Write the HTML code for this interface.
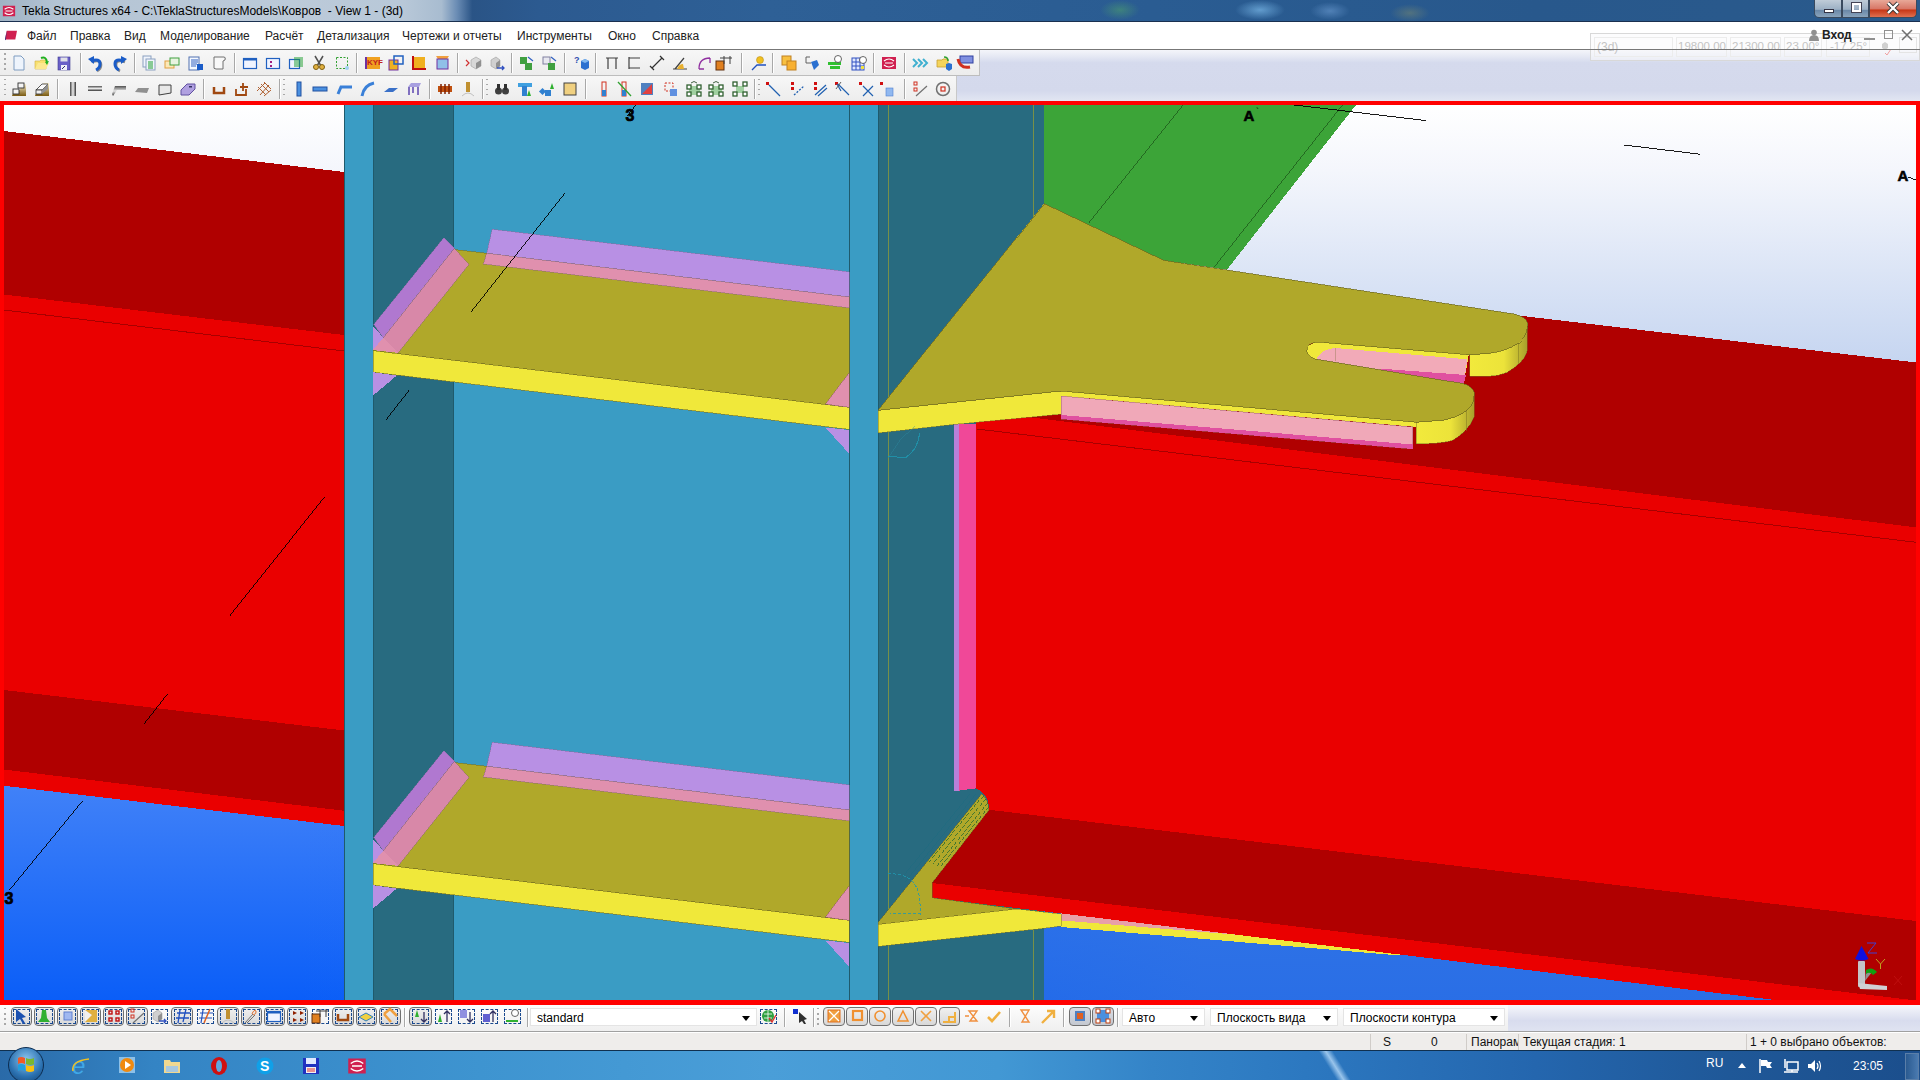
<!DOCTYPE html>
<html><head><meta charset="utf-8">
<style>
*{margin:0;padding:0;box-sizing:border-box}
html,body{width:1920px;height:1080px;overflow:hidden;background:#f0f0f0;font-family:"Liberation Sans",sans-serif;font-size:12px;color:#000;position:relative}
.abs{position:absolute}
.ic{position:absolute;overflow:visible}
.sep{position:absolute;width:2px;border-left:1px solid #a8a8a8;border-right:1px solid #fff}
.grip{position:absolute;width:2px;height:19px;background:repeating-linear-gradient(#a8a8a8 0 1.5px,transparent 1.5px 5px)}
#title{left:0;top:0;width:1920px;height:22px;background:linear-gradient(90deg,#9fb2c4 0%,#b4c4d4 3%,#bccad9 15%,#b8c8d8 21%,#a8bcd0 23%,#6a8cb4 23.8%,#2a5486 24.6%,#2c5a90 28%,#2e6096 40%,#2a5c92 60%,#28588c 80%,#2a5a8c 100%);border-bottom:1px solid #1a3050}
#title .t{left:22px;top:4px;font-size:12px;color:#000;white-space:nowrap}
#menu{left:0;top:22px;width:1920px;height:28px;background:#fff;border-bottom:1px solid #9c9c9c}
#menu span{position:absolute;top:7px;font-size:12px;color:#222}
.tb{left:0;height:26px;background:linear-gradient(#f7f7f7,#ececec)}
#tb1{top:50px;width:980px;border-bottom:1px solid #bdbdbd;border-right:1px solid #c0c0c0}
#tb2{top:76px;width:957px;border-right:1px solid #c8c8c8}
#dock{left:0;top:50px;width:1920px;height:51px;background:linear-gradient(#f4f5fa 0%,#e6e9f4 12%,#d5daed 25%,#d4d9ec 80%,#e2e6f2 100%)}
#btb{left:0;top:1005px;width:1920px;height:27px;background:linear-gradient(#fdfdfd,#efefef);border-bottom:1px solid #a0a0a0}
#btbr{left:1508px;top:1005px;width:412px;height:26px;background:linear-gradient(#f6f7fb,#d8dcee 60%,#dfe3f1)}
#status{left:0;top:1032px;width:1920px;height:18px;background:#efedeb;border-top:1px solid #fff}
#status span{position:absolute;top:2px;font-size:12px;color:#111;white-space:nowrap}
#status .sp{position:absolute;top:1px;width:1px;height:16px;background:#d0ccc8}
#task{left:0;top:1050px;width:1920px;height:30px;background:linear-gradient(90deg,#2a6aa8 0%,#3484c4 8%,#3e94d0 25%,#4a9ed8 40%,#4298d4 52%,#3484c8 60%,#2c78c0 68%,#2466ae 80%,#1f5898 90%,#1b4e8c 100%);border-top:1px solid #10304f}
.bb{position:absolute;top:1007px;height:19px;border:1.5px solid #707070;border-radius:4px;background:linear-gradient(#f0f0f0,#d8d8d8)}
.bb.pr{background:linear-gradient(#d8dce4,#c4c8d0)}
.bd{position:absolute;top:1009px;width:17px;height:15px;border:1px dashed #1a4a90}
.dd{position:absolute;top:1008px;height:18px;background:#fff;border:1px solid #e4e4e4}
.dd span{position:absolute;left:6px;top:2px;font-size:12px;color:#000;white-space:nowrap}
.dd i{position:absolute;right:6px;top:7px;width:0;height:0;border-left:4px solid transparent;border-right:4px solid transparent;border-top:5px solid #000}
.wb{position:absolute;top:0;height:18px;border:1px solid #3a4a5e;border-top:none}
.tbtn{position:absolute;top:1053px;width:42px;height:27px;border:1px solid #1a4870;border-radius:3px;background:linear-gradient(#6eb0e0,#3a88c8 50%,#2e7abc);box-shadow:inset 0 0 0 1px rgba(255,255,255,.35)}
</style></head><body>
<div id="title" class="abs">
<svg class="ic" style="left:2px;top:4px" width="14" height="14" viewBox="0 0 16 16"><rect x="1" y="2" width="14" height="12" fill="#d02050"/><path d="M3,6 Q8,2 13,6 M3,10 Q8,14 13,10 M4,8 H12" stroke="#fff" stroke-width="1.2" fill="none"/></svg>
<div class="t abs">Tekla Structures x64 - C:\TeklaStructuresModels\Ковров&nbsp; - View 1 - (3d)</div>
<div class="abs" style="left:1100px;top:0;width:40px;height:20px;border-radius:50%;background:radial-gradient(#4a9a70,transparent 70%);opacity:.6"></div>
<div class="abs" style="left:1235px;top:0;width:50px;height:20px;border-radius:50%;background:radial-gradient(#7ab8e8,transparent 70%);opacity:.7"></div>
<div class="abs" style="left:1310px;top:2px;width:40px;height:18px;border-radius:50%;background:radial-gradient(#6a9ad0,transparent 70%);opacity:.6"></div>
<div class="abs" style="left:1390px;top:4px;width:40px;height:18px;border-radius:50%;background:radial-gradient(#7a8a70,transparent 70%);opacity:.5"></div>
<div class="wb" style="left:1814px;width:28px;border-radius:0 0 0 5px;background:linear-gradient(#c0ccd8,#9cb0c4 55%,#6a88a8 60%,#8aa4bc)"></div>
<div class="wb" style="left:1842px;width:27px;background:linear-gradient(#c0ccd8,#9cb0c4 55%,#6a88a8 60%,#8aa4bc)"></div>
<div class="wb" style="left:1869px;width:48px;border-radius:0 0 5px 0;background:linear-gradient(#e8a898,#d87868 50%,#c83818 60%,#e07050)"></div>
<div class="abs" style="left:1824px;top:9px;width:10px;height:4px;background:#fff;border:1px solid #334"></div>
<div class="abs" style="left:1852px;top:3px;width:9px;height:9px;border:2px solid #fff;outline:1px solid #445"></div>
<svg class="ic" style="left:1886px;top:2px" width="14" height="12" viewBox="0 0 14 12"><path d="M2,1 L12,11 M12,1 L2,11" stroke="#333" stroke-width="4"/><path d="M2,1 L12,11 M12,1 L2,11" stroke="#fff" stroke-width="2.4"/></svg>
</div>
<div id="menu" class="abs">
<svg class="ic" style="left:4px;top:8px" width="14" height="12" viewBox="0 0 16 14"><path d="M3,1 H15 L13,11 H1Z" fill="#d02050"/><path d="M1,11 L3,1 L2,12Z" fill="#303080"/></svg>
<span style="left:27px">Файл</span><span style="left:70px">Правка</span><span style="left:124px">Вид</span><span style="left:160px">Моделирование</span><span style="left:265px">Расчёт</span><span style="left:317px">Детализация</span><span style="left:402px">Чертежи и отчеты</span><span style="left:517px">Инструменты</span><span style="left:608px">Окно</span><span style="left:652px">Справка</span>
</div>
<div id="dock" class="abs"></div>
<div class="abs" style="left:1590px;top:33px;width:330px;height:28px;border:1px solid #d8d8d8;background:rgba(250,250,252,.55)"></div>
<div class="abs" style="left:1594px;top:37px;width:79px;height:20px;border:1px solid #ececec"></div>
<div class="abs" style="left:1676px;top:37px;width:51px;height:20px;border:1px solid #ececec"></div>
<div class="abs" style="left:1730px;top:37px;width:51px;height:20px;border:1px solid #ececec"></div>
<div class="abs" style="left:1784px;top:37px;width:38px;height:20px;border:1px solid #ececec"></div>
<div class="abs" style="left:1826px;top:37px;width:44px;height:20px;border:1px solid #ececec"></div>
<div class="abs" style="left:1899px;top:37px;width:18px;height:16px;border:1px solid #e4e4e4"></div>
<span class="abs" style="left:1597px;top:40px;color:#c4c4c4;font-size:12px">(3d)</span>
<span class="abs" style="left:1678px;top:40px;color:#c4c4c4;font-size:11.5px">19800.00</span>
<span class="abs" style="left:1732px;top:40px;color:#c4c4c4;font-size:11.5px">21300.00</span>
<span class="abs" style="left:1786px;top:40px;color:#c4c4c4;font-size:11.5px">23.00°</span>
<span class="abs" style="left:1830px;top:40px;color:#c4c4c4;font-size:11.5px">-17.25°</span>
<svg class="ic" style="left:1880px;top:40px" width="12" height="16" viewBox="0 0 12 16"><path d="M2,4 L5,2 L8,4 V8 L5,10 L2,8Z" fill="#d0d0d0"/><path d="M5,13 L7,15 L11,9" stroke="#f0a0a0" fill="none"/></svg>
<div class="abs" style="left:0;top:49px;width:1920px;height:1px;background:#777"></div>
<div id="tb1" class="abs tb"></div><svg class="ic" style="left:1808px;top:29px" width="12" height="12" viewBox="0 0 12 12"><circle cx="6" cy="3.5" r="2.8" fill="#909090"/><path d="M1,12 Q1,6 6,6 Q11,6 11,12Z" fill="#909090"/></svg>
<span class="abs" style="left:1822px;top:28px;font-weight:bold;color:#222">Вход</span>
<div class="abs" style="left:1864px;top:38px;width:11px;height:2px;background:#909090"></div>
<div class="abs" style="left:1884px;top:30px;width:9px;height:9px;border:1px solid #909090"></div>
<svg class="ic" style="left:1900px;top:28px" width="14" height="14" viewBox="0 0 14 14"><path d="M2,2 L12,12 M12,2 L2,12" stroke="#707070" stroke-width="1.5"/></svg>

<div id="tb2" class="abs tb"></div>
<div class="grip" style="left:4px;top:53px"></div><div class="grip" style="left:4px;top:79px"></div>
<svg class="ic" style="left:11px;top:55px" width="16" height="16" viewBox="0 0 16 16"><path d="M3,1 H10 L13,4 V15 H3 Z" fill="#eef4fc" stroke="#7e9cc0" stroke-width="1"/></svg><svg class="ic" style="left:33.5px;top:55px" width="16" height="16" viewBox="0 0 16 16"><path d="M1,6 H6 L7,5 H12 V14 H1 Z" fill="#f8e070" stroke="#d0b040" stroke-width="0.6"/><path d="M1,14 L4,8 H15 L12,14Z" fill="#fce890"/><path d="M7,3 Q12,1 13,7" stroke="#20b020" stroke-width="2" fill="none"/><path d="M11,7 L15,6 L13,10Z" fill="#20b020"/></svg><svg class="ic" style="left:56px;top:55px" width="16" height="16" viewBox="0 0 16 16"><rect x="2" y="2" width="12" height="13" fill="#6a60c8" stroke="#3c3a90" stroke-width="0.6"/><rect x="4.5" y="2.5" width="7" height="4" fill="#e0e0e8"/><rect x="5" y="10" width="6" height="5" fill="#f0f0f8"/><path d="M6,14 L9,11" stroke="#303070"/></svg><div class="sep" style="left:79.5px;top:53px;height:20px"></div><svg class="ic" style="left:87.6px;top:55px" width="16" height="16" viewBox="0 0 16 16"><path d="M3,6 Q12,3 12,9 Q12,13 8,15" stroke="#888" stroke-width="2.6" fill="none" transform="translate(1,1)"/><path d="M3,6 Q12,3 12,9 Q12,13 8,15" stroke="#1a5cc8" stroke-width="3" fill="none"/><path d="M0,4 L6,1 L6,9 Z" fill="#1a5cc8"/></svg><svg class="ic" style="left:111px;top:55px" width="16" height="16" viewBox="0 0 16 16"><path d="M13,6 Q4,3 4,9 Q4,13 8,15" stroke="#888" stroke-width="2.6" fill="none" transform="translate(1,1)"/><path d="M13,6 Q4,3 4,9 Q4,13 8,15" stroke="#1a5cc8" stroke-width="3" fill="none"/><path d="M16,4 L10,1 L10,9 Z" fill="#1a5cc8"/></svg><div class="sep" style="left:133.6px;top:53px;height:20px"></div><svg class="ic" style="left:141px;top:55px" width="16" height="16" viewBox="0 0 16 16"><rect x="2" y="1" width="8" height="11" fill="#f0f4fc" stroke="#8aa0c0"/><rect x="5" y="4" width="9" height="11" fill="#f0f4fc" stroke="#8aa0c0"/><path d="M7,7H12M7,9H12M7,11H12M7,13H12" stroke="#20a030" stroke-width="1"/></svg><svg class="ic" style="left:164px;top:55px" width="16" height="16" viewBox="0 0 16 16"><rect x="1" y="6" width="9" height="7" fill="#fce8b8" stroke="#e0a040"/><rect x="6" y="3" width="9" height="7" fill="#e8f4e0" stroke="#40a040"/></svg><svg class="ic" style="left:188px;top:55px" width="16" height="16" viewBox="0 0 16 16"><rect x="1" y="2" width="10" height="13" fill="#f4f8ff" stroke="#5070b0"/><path d="M3,5H10M3,7H10M3,9H9M3,11H8" stroke="#3060c0"/><rect x="9" y="9" width="6" height="6" fill="#1a5cc8"/></svg><svg class="ic" style="left:211px;top:55px" width="16" height="16" viewBox="0 0 16 16"><path d="M3,2 H13 Q15,2 14,5 L12,6 V14 H5 Q2,14 3,11 Z" fill="#f8f8f8" stroke="#707070"/></svg><div class="sep" style="left:233.5px;top:53px;height:20px"></div><svg class="ic" style="left:242px;top:55px" width="16" height="16" viewBox="0 0 16 16"><rect x="1.5" y="3.5" width="13" height="10" fill="#f0f4ff" stroke="#2060c0" stroke-width="1.2"/><rect x="1.5" y="3.5" width="13" height="2" fill="#2060c0"/></svg><svg class="ic" style="left:265px;top:55px" width="16" height="16" viewBox="0 0 16 16"><rect x="1.5" y="3.5" width="13" height="10" fill="#f0f4ff" stroke="#2060c0" stroke-width="1.2"/><rect x="5" y="6" width="2" height="2" fill="#a02080"/><rect x="5" y="10" width="2" height="2" fill="#a02080"/></svg><svg class="ic" style="left:288px;top:55px" width="16" height="16" viewBox="0 0 16 16"><rect x="1.5" y="4.5" width="10" height="9" fill="#f0f4ff" stroke="#2060c0" stroke-width="1.2"/><path d="M6,3H15M6,5H15M6,7H15M6,9H15M6,11H15" stroke="#20a030"/></svg><svg class="ic" style="left:311px;top:55px" width="16" height="16" viewBox="0 0 16 16"><path d="M4,1 L10,11 M12,1 L6,11" stroke="#505050" stroke-width="1.5"/><circle cx="5" cy="12" r="2.5" fill="#e0b040" stroke="#806010"/><circle cx="11" cy="12" r="2.5" fill="#e0b040" stroke="#806010"/></svg><svg class="ic" style="left:334px;top:55px" width="16" height="16" viewBox="0 0 16 16"><rect x="2.5" y="2.5" width="11" height="11" fill="none" stroke="#30a030" stroke-dasharray="2,1.5"/><circle cx="13" cy="13" r="2" fill="#a0d0f0"/></svg><div class="sep" style="left:356.3px;top:53px;height:20px"></div><svg class="ic" style="left:365.3px;top:55px" width="16" height="16" viewBox="0 0 16 16"><rect x="1" y="2" width="14" height="12" fill="#f0a020"/><path d="M1,14 L1,2" stroke="#7030a0" stroke-width="2"/><text x="2" y="10" font-size="8" font-weight="bold" fill="#c02020" font-family="Liberation Sans">KYF</text></svg><svg class="ic" style="left:387.6px;top:55px" width="16" height="16" viewBox="0 0 16 16"><rect x="1" y="5" width="9" height="10" fill="#f0b020" stroke="#7030a0"/><rect x="6" y="1" width="9" height="8" fill="none" stroke="#2060c0" stroke-width="1.5"/></svg><svg class="ic" style="left:410.6px;top:55px" width="16" height="16" viewBox="0 0 16 16"><rect x="3" y="2" width="11" height="11" fill="#f0b020"/><path d="M2,1 V14 H15" stroke="#c01010" stroke-width="2" fill="none"/></svg><svg class="ic" style="left:433.5px;top:55px" width="16" height="16" viewBox="0 0 16 16"><path d="M2,1 H15 L13,4 H4 Z" fill="#f0a040"/><rect x="3" y="4" width="11" height="10" fill="#90c0e8" stroke="#7030a0"/></svg><div class="sep" style="left:456.5px;top:53px;height:20px"></div><svg class="ic" style="left:465.4px;top:55px" width="16" height="16" viewBox="0 0 16 16"><path d="M1,5 L4,8 L1,11" stroke="#d03030" stroke-width="1.2" fill="none"/><path d="M6,5 L11,2 L16,5 V11 L11,14 L6,11 Z" fill="#d8d8d8" stroke="#909090" stroke-width="0.5"/><path d="M11,8 L16,5 V11 L11,14Z" fill="#909090"/></svg><svg class="ic" style="left:488.6px;top:55px" width="16" height="16" viewBox="0 0 16 16"><path d="M2,5 L7,2 L11,5 L11,11 L7,14 L2,11 Z" fill="#d0d0d0" stroke="#909090" stroke-width="0.5"/><path d="M7,8 L11,5 V11 L7,14Z" fill="#909090"/><path d="M8,13 H15 M13,11 L15,13 L13,15" stroke="#3050c0" stroke-width="1.3" fill="none"/></svg><div class="sep" style="left:510.6px;top:53px;height:20px"></div><svg class="ic" style="left:519.2px;top:55px" width="16" height="16" viewBox="0 0 16 16"><rect x="1" y="2" width="7" height="7" fill="#40a040"/><rect x="6" y="8" width="7" height="7" fill="#40a040"/><path d="M9,2 L14,6" stroke="#3060c0" stroke-width="1.3"/></svg><svg class="ic" style="left:542.2px;top:55px" width="16" height="16" viewBox="0 0 16 16"><rect x="1" y="2" width="7" height="7" fill="#e8e8f0" stroke="#8080a0"/><rect x="6" y="8" width="7" height="7" fill="#40a040"/><path d="M9,2 L14,6" stroke="#3060c0" stroke-width="1.3"/></svg><div class="sep" style="left:564.4px;top:53px;height:20px"></div><svg class="ic" style="left:574px;top:55px" width="16" height="16" viewBox="0 0 16 16"><text x="0" y="8" font-size="9" font-weight="bold" fill="#3050b0" font-family="Liberation Sans">?</text><path d="M7,6 L11,4 L15,6 V13 L11,15 L7,13Z" fill="#2a70d0"/><path d="M7,6 L11,4 L15,6 L11,8Z" fill="#80b8f0"/></svg><div class="sep" style="left:595.4px;top:53px;height:20px"></div><svg class="ic" style="left:604px;top:55px" width="16" height="16" viewBox="0 0 16 16"><path d="M2,3 H14 M4,3 V14 M12,3 V14" stroke="#404040" stroke-width="1.2" fill="none"/></svg><svg class="ic" style="left:626.3px;top:55px" width="16" height="16" viewBox="0 0 16 16"><path d="M3,2 V14 M3,3 H14 M3,13 H14" stroke="#404040" stroke-width="1.2" fill="none"/></svg><svg class="ic" style="left:649.3px;top:55px" width="16" height="16" viewBox="0 0 16 16"><path d="M3,13 L13,3 M1,11 L5,15 M11,1 L15,5" stroke="#303030" stroke-width="1.2"/></svg><svg class="ic" style="left:672.3px;top:55px" width="16" height="16" viewBox="0 0 16 16"><path d="M1,14 H15 M3,14 L12,3" stroke="#404040" stroke-width="1.2"/><path d="M5,14 Q7,9 11,9 L12,14Z" fill="#e8b030"/></svg><svg class="ic" style="left:695.9px;top:55px" width="16" height="16" viewBox="0 0 16 16"><path d="M3,14 Q3,3 14,3 M14,3 V8 M3,14 H8" stroke="#9030a0" stroke-width="1.3" fill="none"/></svg><svg class="ic" style="left:716px;top:55px" width="16" height="16" viewBox="0 0 16 16"><rect x="0" y="6" width="8" height="9" fill="#e08020" stroke="#603010"/><path d="M4,3 H16 M8,1 V9 M14,1 V9" stroke="#404040"/></svg><div class="sep" style="left:741.4px;top:53px;height:20px"></div><svg class="ic" style="left:751.4px;top:55px" width="16" height="16" viewBox="0 0 16 16"><circle cx="9" cy="5" r="3.5" fill="#f0c020" stroke="#b08010" stroke-width="0.5"/><path d="M1,15 L6,10 H15" stroke="#2050c0" stroke-width="1.3" fill="none"/></svg><div class="sep" style="left:772.3px;top:53px;height:20px"></div><svg class="ic" style="left:781px;top:55px" width="16" height="16" viewBox="0 0 16 16"><rect x="1" y="1" width="9" height="9" fill="#f8c040" stroke="#c08020"/><rect x="6" y="6" width="9" height="9" fill="#f8b030" stroke="#c08020"/></svg><svg class="ic" style="left:804px;top:55px" width="16" height="16" viewBox="0 0 16 16"><path d="M2,2 V8 H7 M2,2 H6" stroke="#606060" fill="none"/><path d="M7,7 L13,5 L15,10 L10,15 Z" fill="#2a70d0"/></svg><svg class="ic" style="left:827.3px;top:55px" width="16" height="16" viewBox="0 0 16 16"><rect x="1" y="7" width="13" height="3" fill="#30c030"/><rect x="3" y="11" width="10" height="3" fill="#30c030"/><circle cx="11" cy="4" r="3.5" fill="#fff" stroke="#404040" stroke-width="0.8"/></svg><svg class="ic" style="left:850.5px;top:55px" width="16" height="16" viewBox="0 0 16 16"><rect x="1" y="3" width="12" height="12" fill="#e0e8ff" stroke="#3050c0"/><path d="M1,7H13M1,11H13M5,3V15M9,3V15" stroke="#3050c0"/><circle cx="12" cy="5" r="3.5" fill="#fff" stroke="#404040" stroke-width="0.8"/><rect x="10" y="11" width="3" height="3" fill="#f0e040"/></svg><div class="sep" style="left:872.6px;top:53px;height:20px"></div><svg class="ic" style="left:880.8px;top:55px" width="16" height="16" viewBox="0 0 16 16"><rect x="1" y="2" width="14" height="12" fill="#d02050"/><path d="M3,6 Q8,2 13,6 M3,10 Q8,14 13,10 M4,8 H12" stroke="#fff" stroke-width="1.2" fill="none"/></svg><div class="sep" style="left:903.5px;top:53px;height:20px"></div><svg class="ic" style="left:911.7px;top:55px" width="16" height="16" viewBox="0 0 16 16"><path d="M1,4 L5,8 L1,12 M6,4 L10,8 L6,12 M11,4 L15,8 L11,12" stroke="#40b0d0" stroke-width="2" fill="none"/></svg><svg class="ic" style="left:935.6px;top:55px" width="16" height="16" viewBox="0 0 16 16"><path d="M1,5 H6 L7,4 H12 V12 H1 Z" fill="#f4d45c" stroke="#c8a030" stroke-width="0.8"/><path d="M8,2 Q12,2 12,6" stroke="#30a030" stroke-width="1.6" fill="none"/><path d="M10,9 L13,8 L16,9 V14 L13,16 L10,14Z" fill="#2a70d0"/></svg><svg class="ic" style="left:957.4px;top:55px" width="16" height="16" viewBox="0 0 16 16"><rect x="3" y="1" width="13" height="7" fill="#8090e0" stroke="#3040a0"/><path d="M1,4 Q3,14 13,12" stroke="#d03020" stroke-width="3" fill="none"/></svg>
<svg class="ic" style="left:11px;top:81px" width="16" height="16" viewBox="0 0 16 16"><defs><linearGradient id="gg1" x1="0" y1="0" x2="0" y2="1"><stop offset="0" stop-color="#f8f0d0"/><stop offset="1" stop-color="#7a5a10"/></linearGradient></defs><path d="M1,15 L3,9 H9 L10,3 H15 V15Z" fill="url(#gg1)"/><rect x="7" y="2" width="6" height="5" fill="#f4f4f4" stroke="#303030" stroke-width="0.9"/><rect x="2" y="8" width="6" height="5" fill="#f4f4f4" stroke="#303030" stroke-width="0.9"/></svg><svg class="ic" style="left:33.5px;top:81px" width="16" height="16" viewBox="0 0 16 16"><path d="M1,15 L3,9 L10,2 H15 V15Z" fill="url(#gg1)"/><path d="M2,9 L8,3 H14 L8,9Z" fill="#fafafa" stroke="#303030" stroke-width="0.8"/><rect x="2" y="9" width="6" height="4" fill="#f0f0f0" stroke="#303030" stroke-width="0.8"/><path d="M8,9 L14,3 V8 L8,13Z" fill="#909090"/></svg><div class="sep" style="left:56.5px;top:79px;height:20px"></div><svg class="ic" style="left:65px;top:81px" width="16" height="16" viewBox="0 0 16 16"><defs><linearGradient id="gv" x1="0" y1="0" x2="1" y2="0"><stop offset="0" stop-color="#404040"/><stop offset="0.5" stop-color="#f0f0f0"/><stop offset="1" stop-color="#303030"/></linearGradient></defs><rect x="5" y="1" width="6" height="14" fill="url(#gv)"/></svg><svg class="ic" style="left:87px;top:81px" width="16" height="16" viewBox="0 0 16 16"><defs><linearGradient id="gh" x1="0" y1="0" x2="0" y2="1"><stop offset="0" stop-color="#505050"/><stop offset="0.5" stop-color="#e8e8e8"/><stop offset="1" stop-color="#303030"/></linearGradient></defs><rect x="1" y="5" width="14" height="5" fill="url(#gh)"/></svg><svg class="ic" style="left:110.6px;top:81px" width="16" height="16" viewBox="0 0 16 16"><path d="M1,13 L4,5 H15 V9 H6 L2,15Z" fill="url(#gh)"/></svg><svg class="ic" style="left:133.6px;top:81px" width="16" height="16" viewBox="0 0 16 16"><path d="M1,11 L4,7 H15 L13,12 Z" fill="#909090"/></svg><svg class="ic" style="left:157px;top:81px" width="16" height="16" viewBox="0 0 16 16"><path d="M2,4 H14 V12 L2,14Z" fill="#e8e8e8" stroke="#404040"/></svg><svg class="ic" style="left:180px;top:81px" width="16" height="16" viewBox="0 0 16 16"><path d="M1,9 L7,3 H15 V8 L9,14 H1Z" fill="#b0a0e0" stroke="#6050a0"/><rect x="9" y="5" width="3" height="1.5" fill="#303060"/></svg><div class="sep" style="left:202.6px;top:79px;height:20px"></div><svg class="ic" style="left:211px;top:81px" width="16" height="16" viewBox="0 0 16 16"><path d="M3,6 V12 H13 V6" stroke="#a04810" stroke-width="2.5" fill="none"/></svg><svg class="ic" style="left:234px;top:81px" width="16" height="16" viewBox="0 0 16 16"><path d="M2,8 V14 H12 V8 M9,2 V10 M6,6 H14" stroke="#a04810" stroke-width="1.8" fill="none"/></svg><svg class="ic" style="left:256.2px;top:81px" width="16" height="16" viewBox="0 0 16 16"><path d="M2,6 L10,14 M5,3 L13,11 M8,1 L15,8 M1,10 L9,2 M4,14 L13,4 M8,15 L15,9" stroke="#b06030" stroke-width="1" fill="none"/></svg><div class="sep" style="left:278.5px;top:79px;height:20px"></div><div class="grip" style="left:283px;top:79px"></div><svg class="ic" style="left:290.7px;top:81px" width="16" height="16" viewBox="0 0 16 16"><rect x="6" y="1" width="4" height="14" fill="#4a90e0" stroke="#2050a0"/></svg><svg class="ic" style="left:312.4px;top:81px" width="16" height="16" viewBox="0 0 16 16"><rect x="1" y="6" width="14" height="4" fill="#4a90e0" stroke="#2050a0"/></svg><svg class="ic" style="left:336.6px;top:81px" width="16" height="16" viewBox="0 0 16 16"><path d="M1,13 L4,6 H15" stroke="#3a80d8" stroke-width="3" fill="none"/></svg><svg class="ic" style="left:359.6px;top:81px" width="16" height="16" viewBox="0 0 16 16"><path d="M2,15 Q4,4 14,2" stroke="#3a80d8" stroke-width="3" fill="none"/></svg><svg class="ic" style="left:382.5px;top:81px" width="16" height="16" viewBox="0 0 16 16"><path d="M1,11 L6,7 H15 L10,11Z" fill="#3a70c8"/></svg><svg class="ic" style="left:405.5px;top:81px" width="16" height="16" viewBox="0 0 16 16"><path d="M2,6 L5,2 H15 L13,6Z" fill="#a8a0e0"/><path d="M3,6 V14 M12,6 V14 M7,6 V12" stroke="#8070c0" stroke-width="2"/></svg><div class="sep" style="left:428.5px;top:79px;height:20px"></div><svg class="ic" style="left:436.7px;top:81px" width="16" height="16" viewBox="0 0 16 16"><rect x="1" y="5" width="14" height="6" fill="#c05010"/><path d="M4,3V13M8,3V13M12,3V13" stroke="#802000" stroke-width="1.5"/></svg><svg class="ic" style="left:459.7px;top:81px" width="16" height="16" viewBox="0 0 16 16"><rect x="6" y="1" width="4" height="10" fill="#c09030"/><path d="M2,15 Q8,9 14,15" stroke="#c0c0c0" fill="none"/></svg><div class="sep" style="left:481.5px;top:79px;height:20px"></div><div class="grip" style="left:486px;top:79px"></div><svg class="ic" style="left:493.7px;top:81px" width="16" height="16" viewBox="0 0 16 16"><circle cx="4.5" cy="10" r="3.5" fill="#404040"/><circle cx="11.5" cy="10" r="3.5" fill="#404040"/><rect x="3" y="3" width="3" height="6" fill="#303030"/><rect x="10" y="3" width="3" height="6" fill="#303030"/></svg><svg class="ic" style="left:516.6px;top:81px" width="16" height="16" viewBox="0 0 16 16"><rect x="1" y="2" width="14" height="4" fill="#40a0e0"/><rect x="5" y="5" width="5" height="10" fill="#3080d0"/><path d="M10,15 L12,9 L14,15Z" fill="#30b030"/></svg><svg class="ic" style="left:539px;top:81px" width="16" height="16" viewBox="0 0 16 16"><rect x="1" y="8" width="5" height="5" fill="#3080d0" transform="rotate(45 3.5 10.5)"/><rect x="6" y="9" width="6" height="6" fill="#3080d0"/><path d="M11,8 L13,2 L15,8Z" fill="#30b030"/></svg><svg class="ic" style="left:561.9px;top:81px" width="16" height="16" viewBox="0 0 16 16"><rect x="2" y="2" width="12" height="12" fill="#f0d080" stroke="#404040"/></svg><div class="sep" style="left:585.2px;top:79px;height:20px"></div><svg class="ic" style="left:595.7px;top:81px" width="16" height="16" viewBox="0 0 16 16"><rect x="6" y="1" width="4" height="14" fill="none" stroke="#d03020"/><rect x="6" y="9" width="4" height="6" fill="#3080d0"/></svg><svg class="ic" style="left:616.1px;top:81px" width="16" height="16" viewBox="0 0 16 16"><rect x="6" y="1" width="4" height="14" fill="none" stroke="#d03020"/><rect x="6" y="9" width="4" height="6" fill="#3080d0"/><path d="M2,1 L15,15" stroke="#30a030" stroke-width="1.3"/></svg><svg class="ic" style="left:639.1px;top:81px" width="16" height="16" viewBox="0 0 16 16"><rect x="2" y="2" width="12" height="12" fill="#5080c0"/><path d="M3,13 L13,3 V13Z" fill="#e04040"/></svg><svg class="ic" style="left:662.7px;top:81px" width="16" height="16" viewBox="0 0 16 16"><rect x="2" y="2" width="8" height="8" fill="none" stroke="#d03020" stroke-dasharray="2,1.5"/><rect x="7" y="8" width="7" height="7" fill="#6090e0"/></svg><svg class="ic" style="left:685.6px;top:81px" width="16" height="16" viewBox="0 0 16 16"><rect x="3" y="5" width="11" height="9" fill="#a0d0a0"/><rect x="1" y="4" width="4" height="4" fill="#fff" stroke="#306030" stroke-width="1.3"/><rect x="11" y="4" width="4" height="4" fill="#fff" stroke="#306030" stroke-width="1.3"/><rect x="1" y="11" width="4" height="4" fill="#fff" stroke="#306030" stroke-width="1.3"/><rect x="11" y="11" width="4" height="4" fill="#fff" stroke="#306030" stroke-width="1.3"/><path d="M5,2 Q8,-1 11,2" stroke="#406040" fill="none"/></svg><svg class="ic" style="left:708px;top:81px" width="16" height="16" viewBox="0 0 16 16"><rect x="3" y="5" width="11" height="9" fill="#a0d0a0"/><rect x="1" y="4" width="4" height="4" fill="#fff" stroke="#306030" stroke-width="1.3"/><rect x="11" y="4" width="4" height="4" fill="#fff" stroke="#306030" stroke-width="1.3"/><rect x="1" y="11" width="4" height="4" fill="#fff" stroke="#306030" stroke-width="1.3"/><rect x="11" y="11" width="4" height="4" fill="#fff" stroke="#306030" stroke-width="1.3"/><path d="M5,2 Q8,-1 11,2" stroke="#406040" fill="none"/></svg><svg class="ic" style="left:732.4px;top:81px" width="16" height="16" viewBox="0 0 16 16"><rect x="4" y="5" width="8" height="7" fill="#a0d0a0"/><rect x="1" y="1" width="4" height="4" fill="#fff" stroke="#306030" stroke-width="1.3"/><rect x="11" y="1" width="4" height="4" fill="#fff" stroke="#306030" stroke-width="1.3"/><rect x="1" y="11" width="4" height="4" fill="#fff" stroke="#306030" stroke-width="1.3"/><rect x="11" y="11" width="4" height="4" fill="#fff" stroke="#306030" stroke-width="1.3"/></svg><div class="sep" style="left:753.8px;top:79px;height:20px"></div><div class="grip" style="left:758px;top:79px"></div><svg class="ic" style="left:765.4px;top:81px" width="16" height="16" viewBox="0 0 16 16"><rect x="1" y="1" width="3" height="3" fill="#d01010"/><path d="M4,4 L15,15" stroke="#2060b0" stroke-width="1.3"/></svg><svg class="ic" style="left:789.4px;top:81px" width="16" height="16" viewBox="0 0 16 16"><rect x="2" y="1" width="3" height="3" fill="#d01010"/><rect x="2" y="6" width="3" height="3" fill="#d01010"/><path d="M5,14 L15,5" stroke="#2060b0" stroke-width="1.3" stroke-dasharray="2,1.5"/></svg><svg class="ic" style="left:811.9px;top:81px" width="16" height="16" viewBox="0 0 16 16"><rect x="2" y="1" width="3" height="3" fill="#d01010"/><rect x="2" y="6" width="3" height="3" fill="#d01010"/><path d="M3,14 L14,4 M6,15 L15,7" stroke="#2060b0" stroke-width="1.2"/></svg><svg class="ic" style="left:834.4px;top:81px" width="16" height="16" viewBox="0 0 16 16"><rect x="1" y="1" width="3" height="3" fill="#d01010"/><path d="M3,3 L7,10 M4,3 L15,14" stroke="#2060b0" stroke-width="1.2"/><path d="M7,1 L2,8" stroke="#606060"/></svg><svg class="ic" style="left:858.3px;top:81px" width="16" height="16" viewBox="0 0 16 16"><rect x="1" y="1" width="3" height="3" fill="#d01010"/><path d="M5,5 L15,15 M15,5 L5,15" stroke="#2060b0" stroke-width="1.2"/></svg><svg class="ic" style="left:879.4px;top:81px" width="16" height="16" viewBox="0 0 16 16"><rect x="1" y="1" width="3" height="3" fill="#d01010"/><rect x="7" y="7" width="7" height="8" fill="#90b8f0" stroke="#5080d0" stroke-width="0.6"/></svg><div class="sep" style="left:903.5px;top:79px;height:20px"></div><svg class="ic" style="left:911.7px;top:81px" width="16" height="16" viewBox="0 0 16 16"><rect x="2" y="1" width="3" height="3" fill="none" stroke="#d03020"/><rect x="2" y="7" width="3" height="3" fill="none" stroke="#d03020"/><path d="M4,15 L15,5" stroke="#707070" stroke-width="1.2"/></svg><svg class="ic" style="left:934.9px;top:81px" width="16" height="16" viewBox="0 0 16 16"><circle cx="8" cy="8" r="6.5" fill="none" stroke="#707070" stroke-width="1.5"/><rect x="6" y="6" width="4" height="4" fill="none" stroke="#d03020" stroke-width="1.2"/></svg>
<div id="vp" class="abs" style="left:0;top:101px;width:1920px;height:904px">
<svg width="1920" height="904" viewBox="0 101 1920 904" style="display:block" shape-rendering="crispEdges">
<defs>
<linearGradient id="bgw" x1="0" y1="105" x2="0" y2="370" gradientUnits="userSpaceOnUse"><stop offset="0" stop-color="#ffffff"/><stop offset="0.25" stop-color="#f4f6fc"/><stop offset="1" stop-color="#c4d4f0"/></linearGradient>
<linearGradient id="bgb" x1="0" y1="780" x2="0" y2="1000" gradientUnits="userSpaceOnUse"><stop offset="0" stop-color="#4282f8"/><stop offset="1" stop-color="#0a5ef8"/></linearGradient>
<linearGradient id="ytab" x1="1416" y1="0" x2="1474" y2="0" gradientUnits="userSpaceOnUse"><stop offset="0" stop-color="#f2ea3c"/><stop offset="0.6" stop-color="#ece33a"/><stop offset="1" stop-color="#a8a02c"/></linearGradient><linearGradient id="ytab2" x1="1469" y1="0" x2="1527" y2="0" gradientUnits="userSpaceOnUse"><stop offset="0" stop-color="#f2ea3c"/><stop offset="0.6" stop-color="#ece33a"/><stop offset="1" stop-color="#a8a02c"/></linearGradient>
<linearGradient id="bgbh" x1="300" y1="0" x2="1200" y2="0" gradientUnits="userSpaceOnUse"><stop offset="0" stop-color="#3070e0" stop-opacity="0"/><stop offset="1" stop-color="#3474e0" stop-opacity="0.75"/></linearGradient>
<clipPath id="vc"><rect x="4" y="105" width="1912" height="895"/></clipPath>
</defs>
<rect x="0" y="101" width="1920" height="904" fill="#f00"/>
<g clip-path="url(#vc)">
<rect x="4" y="105" width="1912" height="500" fill="url(#bgw)"/>
<rect x="4" y="600" width="1912" height="400" fill="url(#bgb)"/><rect x="4" y="600" width="1912" height="400" fill="url(#bgbh)"/>
<!-- LEFT BEAM -->
<polygon points="4,131 344,172 344,335 4,294.5" fill="#b00000"/>
<polygon points="4,294.5 344,335 344,730.5 4,690" fill="#ea0000"/>
<line x1="4" y1="310" x2="344" y2="351" stroke="#a80000" stroke-width="1"/>
<polygon points="4,690 344,730.5 344,810.75 4,769.5" fill="#b00000"/>
<polygon points="4,769.5 344,810.75 344,826 4,785.75" fill="#ea0000"/>
<!-- COLUMN -->
<rect x="344" y="105" width="29" height="895" fill="#3a9cc4"/>
<rect x="373" y="105" width="81" height="895" fill="#286b80"/>
<rect x="454" y="105" width="395" height="895" fill="#3a9cc4"/>
<rect x="849" y="105" width="29" height="895" fill="#3a9cc4"/>
<rect x="878" y="105" width="166" height="895" fill="#286b80"/>
<line x1="344.5" y1="105" x2="344.5" y2="1000" stroke="#1f5a6c"/>
<line x1="373.5" y1="105" x2="373.5" y2="1000" stroke="#1f5a6c"/>
<line x1="453.5" y1="105" x2="453.5" y2="1000" stroke="#1f5a6c"/>
<line x1="849.5" y1="105" x2="849.5" y2="1000" stroke="#1f5a6c"/>
<line x1="878.5" y1="105" x2="878.5" y2="1000" stroke="#1f5a6c"/>
<line x1="888.5" y1="105" x2="888.5" y2="1000" stroke="#8c9a3a" stroke-width="0.8"/>
<line x1="1033.5" y1="105" x2="1033.5" y2="1000" stroke="#8c9a3a" stroke-width="0.8"/>
<!-- STIFFENERS -->
<g id="stf">
<polygon points="373,350.7 454,249.5 849,295 849,407.3" fill="#b0a82a" stroke="#7c7420" stroke-width="0.6"/>
<polygon points="373,350.7 849,407.3 849,429.4 373,372.2" fill="#f0e83a" stroke="#7c7420" stroke-width="0.6"/>
<polygon points="492.2,229.3 849,271.8 849,297 486.7,253.3" fill="#b890e4" stroke="#8a6aa0" stroke-width="0.5"/>
<polygon points="486.7,253.3 849,297 849,307.9 483.3,264" fill="#e090ae" stroke="#8a6a70" stroke-width="0.5"/>
<polygon points="373.8,324.4 443.8,237.8 454.4,248.4 383.3,337.8" fill="#b078d0" stroke="#8a6aa0" stroke-width="0.5"/>
<polygon points="454.4,248.4 468.9,264.4 398.2,352.9 383.3,337.8" fill="#d888a8" stroke="#8a6a70" stroke-width="0.5"/>
<polygon points="373,326 383.3,337.8 373,350" fill="#b890e4"/>
<polygon points="373,350 383.3,337.8 398.2,352.9" fill="#e090ae"/>
<polygon points="373,372.2 396.7,375.6 373,395.6" fill="#b890e4"/>
<polygon points="825.4,404.2 849,372.9 849,407.3" fill="#e090ae" stroke="#8a5a60" stroke-width="0.5"/>
<polygon points="825.4,427.5 849,430 849,453.5" fill="#b890e4"/>
</g>
<use href="#stf" transform="translate(0,513)"/>
<!-- GREEN MEMBER -->
<polygon points="1044,105 1356,105 1227,269.6 1163.8,260.4 1044,203.5" fill="#3ca438"/>
<line x1="1342.5" y1="105" x2="1214" y2="267.3" stroke="#1e5a1c" stroke-width="0.8"/>
<line x1="1183" y1="105" x2="1089" y2="222.6" stroke="#1e5a1c" stroke-width="0.8"/>
<polygon points="1061,905 1400,940 1400,955.5 1061,927" fill="#f0e83a"/>
<polygon points="1061,905 1240,925 1240,935 1061,920.4" fill="#e8a0a8"/>
<!-- RIGHT BEAM -->
<polygon points="1100,266 1916,362.5 1916,527.4 976,410.6 1061,391" fill="#b00000"/>
<polygon points="976,410.6 1916,527.4 1916,921 988.6,809.7 976,790" fill="#ea0000"/>
<line x1="977" y1="429" x2="1916" y2="542.3" stroke="#a80000" stroke-width="1"/>
<polygon points="954,424 959,424 959,790.7 954,791.4" fill="#b880d8"/>
<polygon points="959,424 976,424 976,788.3 959,790.7" fill="#f04898"/>
<path d="M954,791.4 L976,788.3 Q986,792 989,805 L989,812 L970,830 L954,830 Z" fill="#286b80"/>
<polygon points="988.6,809.7 1916,921 1916,1000.5 932,883" fill="#b00000"/>
<polygon points="932,883 1916,1000.5 1916,1000 1775,1000 932,897.8" fill="#ea0000"/>
<!-- LOWER GUSSET -->
<path d="M878,922.6 L981.7,794 Q988,798 989,810 L932,883 L932,897.8 L1017,909 L878,924.4 Z" fill="#b0a82a" stroke="#6a6420" stroke-width="0.5"/>
<polygon points="878,924.4 1017,909 1061,914 1061,926 1044,928.3 878,946.4" fill="#f0e83a" stroke="#7c7420" stroke-width="0.5"/>
<!-- UPPER GUSSET -->
<polygon points="878,410.3 1061,391 1061,414.2 954.2,424.4 878,433" fill="#f0e83a" stroke="#7c7420" stroke-width="0.5"/>
<polygon points="1061,391 1416.3,422.2 1416.3,427 1061,396" fill="#f0e83a"/>
<polygon points="1061,396 1412.6,427 1412.6,449 1061,419" fill="#f0a8b8" stroke="#a06070" stroke-width="0.5"/>
<polygon points="1061,415 1412.6,444.5 1412.6,449 1061,419" fill="#e050a0"/>
<path d="M1416.3,422.2 L1444.4,420 Q1458,416 1463.7,412.6 Q1474,405 1474,396.3 L1474,417 Q1468,432 1451.9,440.7 Q1438,444 1416.3,443.7 Z" fill="url(#ytab)" stroke="#7c7420" stroke-width="0.5"/><line x1="1466" y1="410" x2="1466" y2="431" stroke="#7c7420" stroke-width="0.5"/>
<path d="M1469.6,354.8 L1488.9,353.3 Q1510,349 1518.5,343 Q1527,335 1527.4,326.7 L1527.4,350.4 Q1525,362 1506.7,372.6 Q1498,376 1489,376.3 L1469.6,376.3 Z" fill="url(#ytab2)" stroke="#7c7420" stroke-width="0.5"/><line x1="1518.5" y1="343" x2="1518.5" y2="363" stroke="#7c7420" stroke-width="0.5"/>
<path d="M1330,336 L1469.6,350 L1463.7,383.7 L1316,362 L1298,350 Z" fill="#f0e83a"/>
<path d="M1321,353 Q1326,349 1335,348 L1467.4,359.3 L1463.7,383.7 L1316,359.2 Z" fill="#f2aab8"/><line x1="1335" y1="348" x2="1335" y2="361" stroke="#a08060" stroke-width="0.5"/>
<polygon points="1381,368.7 1466,375 1463.7,383.7 1381,370" fill="#e050a0"/>
<path d="M878,410.3 L1044,203.5 L1163.8,260.4 L1514,314 Q1530,318 1527.4,326.7 Q1527,336 1518.5,343 Q1505,352 1488.9,353.3 L1469.6,354.8 L1325.6,342.7 Q1306,340 1306.8,351.4 Q1308,357 1316,359.2 L1463.7,383.7 Q1476,388 1474,396.3 Q1474,406 1463.7,412.6 Q1455,418 1444.4,420 L1416.3,422.2 L1061,391 Z" fill="#b0a82a" stroke="#6f6a1e" stroke-width="0.7"/>
<path d="M888,458 L900,440 L915,426" stroke="#2a8aa0" stroke-width="0.8" fill="none" opacity="0.5"/>
<path d="M888,456 L905,458 Q918,450 919.5,433" stroke="#1e98b0" stroke-width="1" fill="none" opacity="0.8"/>
<g stroke="#2a6a30" stroke-width="0.8" stroke-dasharray="4,1.5" fill="none">
<line x1="983" y1="795.5" x2="929" y2="862"/><line x1="985.5" y1="799" x2="933" y2="864"/><line x1="987.5" y1="803" x2="937" y2="866"/><line x1="988.5" y1="807" x2="941" y2="866"/>
</g>
<g stroke="#1e6a80" stroke-width="0.6" opacity="0.9" fill="none">
<line x1="970" y1="794" x2="900" y2="880"/><line x1="976" y1="794" x2="905" y2="882"/>
</g>
<path d="M888,874 Q919,872 920,904 L920,914 L890,913" stroke="#1e98b0" stroke-width="1" fill="none" opacity="0.8" stroke-dasharray="3,2"/>
<!-- labels -->
<line x1="565" y1="193" x2="471" y2="312" stroke="#000" stroke-width="0.9"/>
<line x1="409.3" y1="390" x2="386.2" y2="419.6" stroke="#000" stroke-width="0.9"/>
<line x1="324.5" y1="497" x2="230" y2="615.5" stroke="#000" stroke-width="0.9"/>
<line x1="167.5" y1="694" x2="144" y2="724" stroke="#000" stroke-width="0.9"/>
<line x1="82.5" y1="801" x2="9.5" y2="890" stroke="#000" stroke-width="0.9"/>
<line x1="1294.4" y1="105" x2="1426" y2="120.6" stroke="#000" stroke-width="0.9"/>
<line x1="1624" y1="145" x2="1700" y2="154.2" stroke="#000" stroke-width="0.9"/>
<line x1="627" y1="116" x2="636" y2="105" stroke="#000" stroke-width="0.9"/>
<text x="625.5" y="121" font-family="Liberation Sans" font-weight="bold" font-size="16" fill="#000" stroke="#000" stroke-width="0.7" shape-rendering="auto">3</text>
<text x="4.5" y="904" font-family="Liberation Sans" font-weight="bold" font-size="16" fill="#000" stroke="#000" stroke-width="0.7">3</text>
<text x="1243.5" y="121" font-family="Liberation Sans" font-weight="bold" font-size="15" fill="#000" stroke="#000" stroke-width="0.6">A</text>
<text x="1256" y="114" font-family="Liberation Sans" font-size="9" fill="#000">`</text>
<text x="1897.5" y="180.5" font-family="Liberation Sans" font-weight="bold" font-size="15" fill="#000" stroke="#000" stroke-width="0.6">A</text>
<line x1="1908" y1="177" x2="1916" y2="180" stroke="#000" stroke-width="0.9"/>
<!-- axis -->
<g shape-rendering="auto">
<path d="M1861.5,946 L1868.5,959 Q1862,962 1855,959 Z" fill="#1010e0"/>
<rect x="1858" y="961" width="7" height="26" fill="#c4c4c8" rx="1"/>
<path d="M1858,983 L1887,986 L1887,990 L1860,989 Z" fill="#d0d0d4"/>
<path d="M1865,981 L1872,972 L1866,970Z" fill="#909090"/>
<path d="M1866,970 Q1872,966 1877,972 L1873,975 Q1870,971 1866,974Z" fill="#10a010"/>
<path d="M1867,943 H1876 L1868,953 H1877" stroke="#4040d0" stroke-width="1" fill="none"/>
<path d="M1876,959 L1880.5,964 L1885,959 M1880.5,964 V969" stroke="#c0a020" stroke-width="1" fill="none"/>
<path d="M1894,976 L1902,985 M1902,976 L1894,985" stroke="#d02020" stroke-width="0.8" opacity="0.6"/>
</g>
</g>
</svg>
</div>
<div id="btb" class="abs"></div>
<div id="btbr" class="abs"></div>
<div class="grip" style="left:4px;top:1008px"></div>
<div class="bb" style="left:10.5px;width:21.5px"></div><div class="bd" style="left:12.75px"></div><svg class="ic" style="left:13.25px;top:1008px" width="16" height="16" viewBox="0 0 16 16"><path d="M3,1 L13,9 L9,10 L12,15 L10,16 L7,11 L3,14Z" fill="#1a50b0"/></svg><div class="bb" style="left:33.8px;width:21.300000000000004px"></div><div class="bd" style="left:35.95px"></div><svg class="ic" style="left:36.45px;top:1008px" width="16" height="16" viewBox="0 0 16 16"><path d="M6,2 H10 L11,10 L14,14 H2 L5,10Z" fill="#30b030"/></svg><div class="bb" style="left:57px;width:21px"></div><div class="bd" style="left:59.0px"></div><svg class="ic" style="left:59.5px;top:1008px" width="16" height="16" viewBox="0 0 16 16"><rect x="4" y="4" width="8" height="8" fill="#a0b8f0" stroke="#6080d0"/></svg><div class="bb" style="left:80px;width:21px"></div><div class="bd" style="left:82.0px"></div><svg class="ic" style="left:82.5px;top:1008px" width="16" height="16" viewBox="0 0 16 16"><rect x="2" y="2" width="12" height="12" fill="#e0b040"/><path d="M2,14 L9,7 L2,2Z" fill="#f0f0f0"/></svg><div class="bb" style="left:103px;width:21px"></div><div class="bd" style="left:105.0px"></div><svg class="ic" style="left:105.5px;top:1008px" width="16" height="16" viewBox="0 0 16 16"><rect x="3" y="3" width="3" height="3" fill="none" stroke="#c01010" stroke-width="1.4"/><rect x="10" y="3" width="3" height="3" fill="none" stroke="#c01010" stroke-width="1.4"/><rect x="3" y="10" width="3" height="3" fill="none" stroke="#c01010" stroke-width="1.4"/><rect x="10" y="10" width="3" height="3" fill="none" stroke="#c01010" stroke-width="1.4"/></svg><div class="bb" style="left:126px;width:21.69999999999999px"></div><div class="bd" style="left:128.35px"></div><svg class="ic" style="left:128.85px;top:1008px" width="16" height="16" viewBox="0 0 16 16"><rect x="2" y="1" width="3" height="3" fill="none" stroke="#d03020"/><rect x="2" y="7" width="3" height="3" fill="none" stroke="#d03020"/><path d="M4,15 L15,5" stroke="#707070" stroke-width="1.2"/></svg><div class="bd" style="left:150.5px"></div><svg class="ic" style="left:151.0px;top:1008px" width="16" height="16" viewBox="0 0 16 16"><path d="M2,5 L7,2 L11,5 L11,11 L7,14 L2,11 Z" fill="#d0d0d0" stroke="#909090" stroke-width="0.5"/><path d="M7,8 L11,5 V11 L7,14Z" fill="#909090"/><path d="M8,13 H15 M13,11 L15,13 L13,15" stroke="#3050c0" stroke-width="1.3" fill="none"/></svg><div class="bb" style="left:171.3px;width:22.099999999999994px"></div><div class="bd" style="left:173.85000000000002px"></div><svg class="ic" style="left:174.35000000000002px;top:1008px" width="16" height="16" viewBox="0 0 16 16"><path d="M2,10 H15 M3,5 H16 M6,2 L4,15 M12,1 L9,14" stroke="#2050c0" stroke-width="1.3"/></svg><div class="bd" style="left:196.5px"></div><svg class="ic" style="left:197.0px;top:1008px" width="16" height="16" viewBox="0 0 16 16"><path d="M2,10 H15 M3,5 H16 M6,2 L4,15" stroke="#2050c0" stroke-width="1.2"/><path d="M13,1 L7,15" stroke="#e06020" stroke-width="1.5"/></svg><div class="bb" style="left:217.3px;width:21.69999999999999px"></div><div class="bd" style="left:219.65px"></div><svg class="ic" style="left:220.15px;top:1008px" width="16" height="16" viewBox="0 0 16 16"><rect x="6" y="1" width="4" height="10" fill="#c09030"/><path d="M2,15 Q8,9 14,15" stroke="#c0c0c0" fill="none"/></svg><div class="bb" style="left:240.5px;width:21.80000000000001px"></div><div class="bd" style="left:242.9px"></div><svg class="ic" style="left:243.4px;top:1008px" width="16" height="16" viewBox="0 0 16 16"><path d="M2,15 L10,6 M4,15 L12,7" stroke="#707070"/><path d="M9,6 Q11,1 13,3 Q14,6 10,7" stroke="#e07030" fill="none"/></svg><div class="bb" style="left:263.5px;width:21.5px"></div><div class="bd" style="left:265.75px"></div><svg class="ic" style="left:266.25px;top:1008px" width="16" height="16" viewBox="0 0 16 16"><rect x="1.5" y="3.5" width="13" height="10" fill="#f0f4ff" stroke="#2060c0" stroke-width="1.2"/><rect x="1.5" y="3.5" width="13" height="2" fill="#2060c0"/></svg><div class="bb" style="left:286.7px;width:21.80000000000001px"></div><div class="bd" style="left:289.1px"></div><svg class="ic" style="left:289.6px;top:1008px" width="16" height="16" viewBox="0 0 16 16"><path d="M3,3 L7,5 L3,7Z M10,3 L14,5 L10,7Z M3,10 L7,12 L3,14Z M10,10 L14,12 L10,14Z" fill="#902000"/></svg><div class="bd" style="left:311.5px"></div><svg class="ic" style="left:312.0px;top:1008px" width="16" height="16" viewBox="0 0 16 16"><rect x="0" y="6" width="8" height="9" fill="#e08020" stroke="#603010"/><path d="M4,3 H16 M8,1 V9 M14,1 V9" stroke="#404040"/></svg><div class="bb" style="left:332.4px;width:21.600000000000023px"></div><div class="bd" style="left:334.7px"></div><svg class="ic" style="left:335.2px;top:1008px" width="16" height="16" viewBox="0 0 16 16"><path d="M3,6 V12 H13 V6" stroke="#a04810" stroke-width="2.5" fill="none"/></svg><div class="bb" style="left:355.6px;width:21.099999999999966px"></div><div class="bd" style="left:357.65px"></div><svg class="ic" style="left:358.15px;top:1008px" width="16" height="16" viewBox="0 0 16 16"><path d="M1,9 L8,5 L15,9 L8,13Z" fill="#f0d040" stroke="#3080c0"/></svg><div class="bb" style="left:378.8px;width:21.80000000000001px"></div><div class="bd" style="left:381.20000000000005px"></div><svg class="ic" style="left:381.70000000000005px;top:1008px" width="16" height="16" viewBox="0 0 16 16"><path d="M2,6 L8,1 L15,8 M2,6 L9,14" stroke="#f0a040" stroke-width="2.5" fill="none"/></svg><div class="bb" style="left:409px;width:22.600000000000023px"></div><div class="bd" style="left:411.8px"></div><svg class="ic" style="left:412.3px;top:1008px" width="16" height="16" viewBox="0 0 16 16"><path d="M3,9 L5,2 L7,9Z" fill="#30b030"/><path d="M12,4 V14 M9,11 L12,14 L15,11" stroke="#303060" stroke-width="1.3" fill="none"/></svg><div class="bd" style="left:434.5px"></div><svg class="ic" style="left:435.0px;top:1008px" width="16" height="16" viewBox="0 0 16 16"><path d="M3,14 L5,6 L7,14Z" fill="#30b030"/><path d="M12,14 V3 M9,6 L12,3 L15,6" stroke="#303060" stroke-width="1.3" fill="none"/></svg><div class="bd" style="left:457.75px"></div><svg class="ic" style="left:458.25px;top:1008px" width="16" height="16" viewBox="0 0 16 16"><rect x="2" y="2" width="7" height="8" fill="#9090e0"/><path d="M12,4 V14 M9,11 L12,14 L15,11" stroke="#303060" stroke-width="1.3" fill="none"/></svg><div class="bd" style="left:480.5px"></div><svg class="ic" style="left:481.0px;top:1008px" width="16" height="16" viewBox="0 0 16 16"><rect x="2" y="6" width="7" height="8" fill="#6060d0"/><path d="M12,14 V3 M9,6 L12,3 L15,6" stroke="#303060" stroke-width="1.3" fill="none"/></svg><div class="bd" style="left:503.5px"></div><svg class="ic" style="left:504.0px;top:1008px" width="16" height="16" viewBox="0 0 16 16"><rect x="2" y="12" width="12" height="2" fill="#30b030"/><circle cx="11" cy="5" r="3.5" fill="#fff" stroke="#404040" stroke-width="0.8"/></svg><div class="sep" style="left:403.5px;top:1008px;height:19px"></div><div class="sep" style="left:526.5px;top:1008px;height:19px"></div><div class="dd" style="left:530px;width:227px"><span>standard</span><i></i></div><div class="bd" style="left:760.3px"></div><svg class="ic" style="left:760.8px;top:1008px" width="16" height="16" viewBox="0 0 16 16"><circle cx="7" cy="8" r="6" fill="#30a040"/><path d="M3,6 H11 M3,10 H11 M7,2 V14" stroke="#fff" stroke-width="0.8"/><path d="M8,10 L11,14 L15,7" stroke="#e03030" stroke-width="1.3" fill="none"/></svg><div class="sep" style="left:783.7px;top:1008px;height:19px"></div><svg class="ic" style="left:792.0px;top:1008px" width="16" height="16" viewBox="0 0 16 16"><rect x="1" y="1" width="5" height="5" fill="#1030d0"/><path d="M7,4 L15,11 L12,12 L14,16 L12,16 L10,13 L7,15Z" fill="#303030"/></svg><div class="sep" style="left:813px;top:1008px;height:19px"></div><div class="grip" style="left:817px;top:1008px"></div><div class="bb" style="left:823.3px;width:21.700000000000045px"></div><svg class="ic" style="left:826.15px;top:1008px" width="16" height="16" viewBox="0 0 16 16"><rect x="2" y="2" width="12" height="12" fill="#f0a040" stroke="#e07020"/><path d="M3,3 L13,13 M13,3 L3,13" stroke="#fff" stroke-width="1.3"/></svg><div class="bb" style="left:846.2px;width:21.799999999999955px"></div><svg class="ic" style="left:849.1px;top:1008px" width="16" height="16" viewBox="0 0 16 16"><rect x="4" y="3" width="9" height="9" fill="none" stroke="#f09030" stroke-width="2.2"/></svg><div class="bb" style="left:869.4px;width:21.899999999999977px"></div><svg class="ic" style="left:872.3499999999999px;top:1008px" width="16" height="16" viewBox="0 0 16 16"><circle cx="8" cy="8" r="5" fill="none" stroke="#f09030" stroke-width="1.6"/></svg><div class="bb" style="left:892.3px;width:22.0px"></div><svg class="ic" style="left:895.3px;top:1008px" width="16" height="16" viewBox="0 0 16 16"><path d="M8,3 L13,13 H3Z" fill="none" stroke="#f09030" stroke-width="1.5"/></svg><div class="bb" style="left:915.3px;width:21.700000000000045px"></div><svg class="ic" style="left:918.15px;top:1008px" width="16" height="16" viewBox="0 0 16 16"><path d="M3,3 L13,13 M13,3 L3,13" stroke="#f0a040" stroke-width="1.6"/></svg><div class="bb" style="left:938.5px;width:21.899999999999977px"></div><svg class="ic" style="left:941.45px;top:1008px" width="16" height="16" viewBox="0 0 16 16"><path d="M2,14 H14 V4 M8,14 V9 H14" stroke="#f0b040" stroke-width="2" fill="none"/></svg><svg class="ic" style="left:964.0px;top:1008px" width="16" height="16" viewBox="0 0 16 16"><path d="M1,8 H5 M5,3 H13 L6,13 H13 Z" stroke="#f09040" stroke-width="1.4" fill="none"/></svg><svg class="ic" style="left:986.0px;top:1008px" width="16" height="16" viewBox="0 0 16 16"><path d="M2,9 L6,13 L14,4" stroke="#f0b040" stroke-width="2.6" fill="none"/></svg><div class="sep" style="left:1009px;top:1008px;height:19px"></div><svg class="ic" style="left:1017.0px;top:1008px" width="16" height="16" viewBox="0 0 16 16"><path d="M4,2 H12 L5,14 H12 Z" stroke="#f09040" stroke-width="1.4" fill="none"/></svg><svg class="ic" style="left:1040.0px;top:1008px" width="16" height="16" viewBox="0 0 16 16"><path d="M2,15 L14,3 M7,3 H14 V10" stroke="#f0b040" stroke-width="2.4" fill="none"/></svg><div class="sep" style="left:1063.4px;top:1008px;height:19px"></div><div class="bb pr" style="left:1069px;width:22px"></div><svg class="ic" style="left:1072.0px;top:1008px" width="16" height="16" viewBox="0 0 16 16"><rect x="3" y="3" width="10" height="10" fill="#5080c0"/><rect x="5" y="5" width="6" height="6" fill="#e06020"/></svg><div class="bb pr" style="left:1092.4px;width:22.0px"></div><svg class="ic" style="left:1095.4px;top:1008px" width="16" height="16" viewBox="0 0 16 16"><rect x="2" y="2" width="12" height="12" fill="#4a90e0"/><rect x="1" y="1" width="4" height="4" fill="#fff" stroke="#c04010"/><rect x="11" y="1" width="4" height="4" fill="#fff" stroke="#c04010"/><rect x="1" y="11" width="4" height="4" fill="#fff" stroke="#c04010"/><rect x="11" y="11" width="4" height="4" fill="#fff" stroke="#c04010"/></svg><div class="sep" style="left:1117.4px;top:1008px;height:19px"></div><div class="dd" style="left:1122px;width:83px"><span>Авто</span><i></i></div><div class="dd" style="left:1210px;width:128px"><span>Плоскость вида</span><i></i></div><div class="dd" style="left:1343px;width:162px"><span>Плоскости контура</span><i></i></div>
<div id="status" class="abs">
<div class="sp" style="left:1370px"></div><div class="sp" style="left:1466px"></div><div class="sp" style="left:1518px"></div><div class="sp" style="left:1746px"></div>
<span style="left:1383px">S</span><span style="left:1431px">0</span>
<div class="abs" style="left:1471px;top:0;width:47px;height:18px;overflow:hidden"><span style="left:0;top:2px">Панорама</span></div>
<span style="left:1523px">Текущая стадия: 1</span>
<span style="left:1750px">1 + 0 выбрано объектов:</span>
</div>
<div id="task" class="abs">
<div class="abs" style="left:1300px;top:0;width:70px;height:30px;background:linear-gradient(58deg,transparent 42%,rgba(200,230,255,.7) 50%,transparent 58%)"></div>
<div class="abs" style="left:8px;top:-4px;width:36px;height:36px;border-radius:50%;background:radial-gradient(circle at 50% 35%,#8ec8f0,#2a70b0 60%,#14406e);border:1px solid #0c2c50"></div>
<svg class="ic" style="left:16px;top:4px" width="20" height="20" viewBox="0 0 20 20"><path d="M2,3 Q5,1 9,3 V9 Q5,7 2,9Z" fill="#f05a28"/><path d="M10,3 Q14,5 18,3 V9 Q14,11 10,9Z" fill="#7ab830"/><path d="M2,10 Q5,8 9,10 V16 Q5,14 2,16Z" fill="#20a0e0"/><path d="M10,10 Q14,12 18,10 V16 Q14,18 10,16Z" fill="#f8c010"/></svg>
<svg class="ic" style="left:71px;top:5px" width="20" height="20" viewBox="0 0 20 20"><text x="1" y="18" font-size="24" font-style="italic" fill="#40a8e8" font-family="Liberation Sans">e</text><path d="M2,15 Q0,5 18,3" stroke="#f0c020" stroke-width="1.5" fill="none"/></svg>
<svg class="ic" style="left:118px;top:5px" width="18" height="18" viewBox="0 0 18 18"><rect x="1" y="1" width="16" height="16" fill="#8cc0e8"/><circle cx="9" cy="9" r="7" fill="#f08a10"/><path d="M7,5 L13,9 L7,13Z" fill="#fff"/></svg>
<svg class="ic" style="left:163px;top:6px" width="18" height="18" viewBox="0 0 18 18"><path d="M1,3 H7 L8,5 H17 V16 H1Z" fill="#f0d890"/><rect x="3" y="9" width="12" height="6" fill="#a8c8e0"/></svg>
<div class="tbtn" style="left:198px"></div><div class="tbtn" style="left:244px"></div><div class="tbtn" style="left:290px"></div><div class="tbtn" style="left:336px"></div>
<svg class="ic" style="left:209px;top:5px" width="20" height="20" viewBox="0 0 20 20"><ellipse cx="10" cy="10" rx="8" ry="9" fill="#d01010"/><ellipse cx="10" cy="10" rx="3" ry="6" fill="#60a8e0"/></svg>
<svg class="ic" style="left:255px;top:5px" width="20" height="20" viewBox="0 0 20 20"><circle cx="10" cy="10" r="8.5" fill="#10a0e8"/><text x="5" y="15" font-size="14" font-weight="bold" fill="#fff" font-family="Liberation Sans">S</text></svg>
<svg class="ic" style="left:301px;top:5px" width="20" height="20" viewBox="0 0 20 20"><rect x="2" y="2" width="16" height="16" fill="#2030c0"/><rect x="5" y="2" width="10" height="6" fill="#e0e8ff"/><rect x="5" y="11" width="10" height="6" fill="#f0f0f0"/><path d="M6,13H14M6,15H14" stroke="#e03030"/></svg>
<svg class="ic" style="left:347px;top:5px" width="20" height="20" viewBox="0 0 16 16"><rect x="1" y="2" width="14" height="12" fill="#d02050"/><path d="M3,6 Q8,2 13,6 M3,10 Q8,14 13,10 M4,8 H12" stroke="#fff" stroke-width="1.2" fill="none"/></svg>
<span class="abs" style="left:1706px;top:5px;color:#fff;font-size:12px">RU</span>
<svg class="ic" style="left:1737px;top:10px" width="10" height="8" viewBox="0 0 10 8"><path d="M1,7 L5,2 L9,7Z" fill="#fff"/></svg>
<svg class="ic" style="left:1758px;top:7px" width="16" height="16" viewBox="0 0 16 16"><path d="M2,1 V15" stroke="#fff" stroke-width="1.5"/><path d="M3,2 H9 L10,4 H14 L12,7 L14,10 H9 L8,8 H3Z" fill="#fff"/></svg>
<svg class="ic" style="left:1783px;top:7px" width="16" height="16" viewBox="0 0 16 16"><rect x="4" y="4" width="11" height="8" fill="none" stroke="#fff" stroke-width="1.5"/><path d="M2,1 V10 M1,14 H15 M9,12 V14" stroke="#fff" stroke-width="1.5"/></svg>
<svg class="ic" style="left:1807px;top:7px" width="16" height="16" viewBox="0 0 16 16"><path d="M1,6 H4 L8,2 V14 L4,10 H1Z" fill="#fff"/><path d="M10,5 Q12,8 10,11 M12,3 Q15,8 12,13" stroke="#fff" stroke-width="1.2" fill="none"/></svg>
<span class="abs" style="left:1853px;top:8px;color:#fff;font-size:12px">23:05</span>
<div class="abs" style="left:1905px;top:2px;width:14px;height:27px;border:1px solid #5a7ea8;background:linear-gradient(90deg,#2a5a90,#4a7ab0)"></div>
</div>
</body></html>
